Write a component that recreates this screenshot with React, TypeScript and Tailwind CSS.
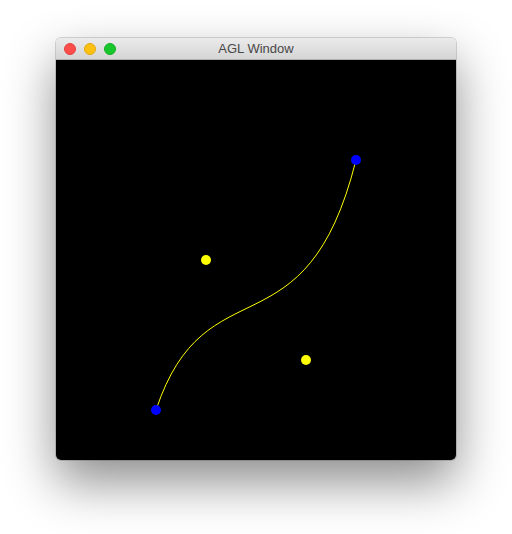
import React from "react";

export default function App() {
  const p0 = [100, 350], p1 = [150, 200], p2 = [250, 300], p3 = [300, 100];
  return (
    <div className="w-[512px] h-[534px] bg-white pt-[38px] pl-[56px]">
      <div className="w-[400px] rounded-[5px] overflow-hidden shadow-[0_22px_50px_rgba(0,0,0,0.45),0_0_0_1px_rgba(0,0,0,0.15)] flex flex-col">
        <div className="relative h-[22px] flex items-center justify-center bg-gradient-to-b from-[#ebebeb] to-[#d5d5d5] border-b border-[#b1b1b1]">
          <div className="absolute left-[8px] top-[5px] flex gap-[8px]">
            <div className="w-[12px] h-[12px] rounded-full bg-[#fd4d4a] border border-[#e4423f]" />
            <div className="w-[12px] h-[12px] rounded-full bg-[#fec111] border border-[#e2a90e]" />
            <div className="w-[12px] h-[12px] rounded-full bg-[#19c62b] border border-[#14ad24]" />
          </div>
          <span className="text-[13px] text-[#474747] leading-none" style={{ fontFamily: '"Liberation Sans", Arial, sans-serif' }}>AGL Window</span>
        </div>
        <div className="w-[400px] h-[400px] bg-black">
          <svg width="400" height="400" viewBox="0 0 400 400">
            <path
              d={`M${p0[0]} ${p0[1]} C${p1[0]} ${p1[1]} ${p2[0]} ${p2[1]} ${p3[0]} ${p3[1]}`}
              fill="none"
              stroke="#ffff00"
              strokeWidth="1"
            />
            <circle cx={p1[0]} cy={p1[1]} r="5" fill="#ffff00" />
            <circle cx={p2[0]} cy={p2[1]} r="5" fill="#ffff00" />
            <circle cx={p0[0]} cy={p0[1]} r="5" fill="#0000ff" />
            <circle cx={p3[0]} cy={p3[1]} r="5" fill="#0000ff" />
          </svg>
        </div>
      </div>
    </div>
  );
}
